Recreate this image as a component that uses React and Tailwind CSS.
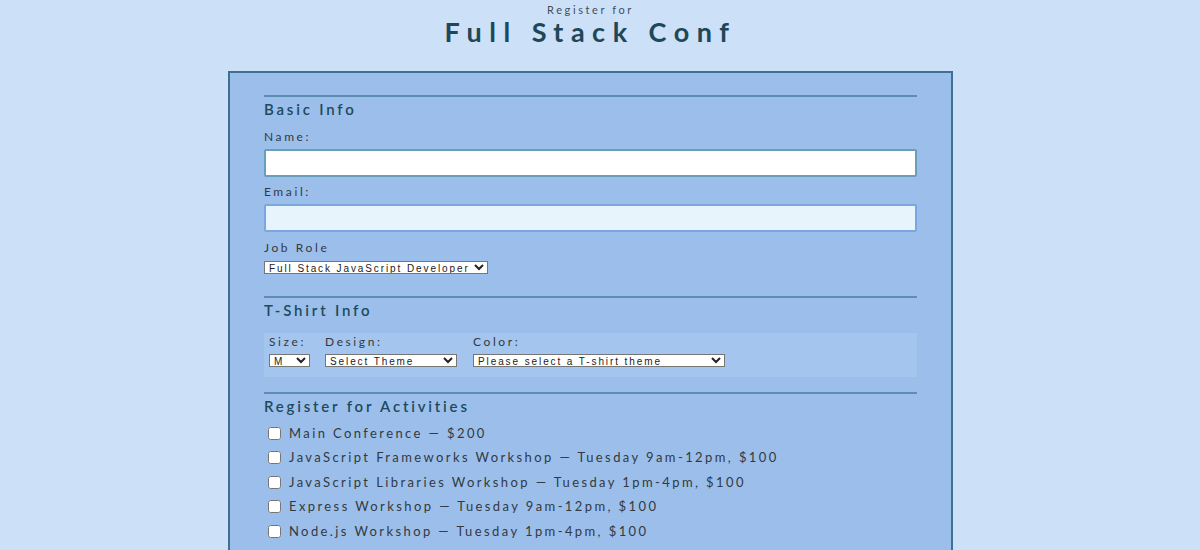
import React from 'react';

const activities = [
  { name: 'Main Conference', detail: '$200' },
  { name: 'JavaScript Frameworks Workshop', detail: 'Tuesday 9am-12pm, $100' },
  { name: 'JavaScript Libraries Workshop', detail: 'Tuesday 1pm-4pm, $100' },
  { name: 'Express Workshop', detail: 'Tuesday 9am-12pm, $100' },
  { name: 'Node.js Workshop', detail: 'Tuesday 1pm-4pm, $100' },
];

const SectionTitle = ({ children }) => (
  <div className="border-t-2 border-[#5e8db3]">
    <h2 className="h-[24px] leading-[24px] text-[15px] font-semibold tracking-[2.8px] text-[#1d4a5f]">
      {children}
    </h2>
  </div>
);

const selectCls =
  "h-[13px] text-[10px] leading-[11px] tracking-[1.9px] font-['Liberation_Sans',Arial,sans-serif] bg-white border border-[#767676] text-[#222]";

const labelCls = 'h-[16px] leading-[16px] text-[12px] tracking-[2.6px] text-[#33393f]';

const App = () => {
  return (
    <div className="min-h-[550px] bg-[#cce0f8] font-['Lato',sans-serif] overflow-hidden">
      <div className="w-[1181px]">
        {/* Header */}
        <header className="text-center pt-[3px]">
          <p className="text-[11px] leading-[14px] tracking-[2.6px] text-[#3f4f5c]">Register for</p>
          <h1 className="text-[27px] leading-[30px] font-bold tracking-[7.5px] text-[#1f4757]">
            Full Stack Conf
          </h1>
        </header>

        {/* Form card */}
        <form className="mx-auto mt-[24px] w-[725px] border-2 border-[#3f6f92] bg-[#9bbfea] px-[34px] pt-[22px] pb-[20px]">
          {/* Basic Info */}
          <SectionTitle>Basic Info</SectionTitle>
          <label className={`block mt-[8px] ${labelCls}`}>Name:</label>
          <input
            type="text"
            className="block mt-[4px] w-full h-[28px] bg-white border-2 border-[#6a9fba] rounded-[2px] outline-none"
          />
          <label className={`block mt-[7px] ${labelCls}`}>Email:</label>
          <input
            type="email"
            className="block mt-[4px] w-full h-[28px] bg-[#e8f4fb] border-2 border-[#7ba6df] rounded-[2px] outline-none"
          />
          <label className={`block mt-[8px] ${labelCls}`}>Job Role</label>
          <select className={`block mt-[5px] w-[224px] ${selectCls}`}>
            <option>Full Stack JavaScript Developer</option>
          </select>

          {/* T-Shirt Info */}
          <div className="mt-[22px]">
            <SectionTitle>T-Shirt Info</SectionTitle>
          </div>
          <div className="mt-[11px] h-[44px] bg-[#a4c5ee] px-[5px] pt-[1px] flex gap-[15px]">
            <div className="flex flex-col">
              <span className={labelCls}>Size:</span>
              <select className={`mt-[4px] w-[41px] ${selectCls}`}>
                <option>M</option>
              </select>
            </div>
            <div className="flex flex-col">
              <span className={labelCls}>Design:</span>
              <select className={`mt-[4px] w-[132px] ${selectCls}`}>
                <option>Select Theme</option>
              </select>
            </div>
            <div className="flex flex-col ml-[1px]">
              <span className={labelCls}>Color:</span>
              <select className={`mt-[4px] w-[252px] ${selectCls}`}>
                <option>Please select a T-shirt theme</option>
              </select>
            </div>
          </div>

          {/* Activities */}
          <div className="mt-[15px]">
            <SectionTitle>Register for Activities</SectionTitle>
          </div>
          <div className="mt-[3px]">
            {activities.map((a) => (
              <label key={a.name} className="flex items-center h-[24.5px] text-[13px] tracking-[2.4px] text-[#33393f]">
                <input type="checkbox" className="ml-[4px] mr-[8px] w-[13px] h-[13px]" />
                <span>
                  {a.name} <span className="text-[#2c3e50]">—</span> {a.detail}
                </span>
              </label>
            ))}
          </div>
        </form>
      </div>
    </div>
  );
};

export default App;
